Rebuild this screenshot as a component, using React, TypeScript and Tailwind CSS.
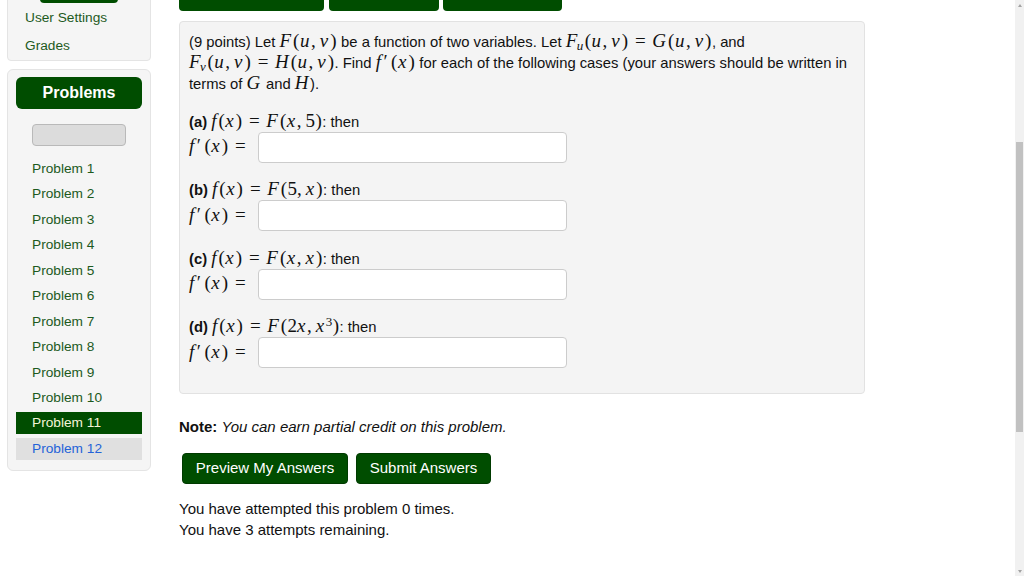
import React from "react";

const serif = { fontFamily: '"Liberation Serif", "Times New Roman", serif' };

function I({ children }: { children: React.ReactNode }) {
  return <span className="italic pr-[1.5px]">{children}</span>;
}
function M({ children }: { children: React.ReactNode }) {
  return (
    <span className="text-[19px] leading-[1] whitespace-nowrap" style={serif}>
      {children}
    </span>
  );
}
function Eq() {
  return <span className="mx-[6.5px]">=</span>;
}
function C() {
  return <span className="mr-[4px]">,</span>;
}
function P({ children }: { children: React.ReactNode }) {
  return <span className="px-[0.5px]">{children}</span>;
}

function Part({ label, rhs }: { label: string; rhs: React.ReactNode }) {
  return (
    <div className="mt-[16.5px]">
      <div className="h-[21px] leading-[18px] whitespace-nowrap">
        <span className="font-bold">({label})</span>{" "}
        <M>
          <I>f</I>
          <P>(</P>
          <I>x</I>
          <P>)</P>
          <Eq />
          {rhs}
        </M>
        : then
      </div>
      <div className="flex items-center h-[31px]">
        <div className="w-[69px] shrink-0 leading-[21px]">
          <M>
            <I>f</I>
            <span className="ml-[1px] mr-[3px]">′</span>
            <P>(</P>
            <I>x</I>
            <P>)</P>
            <Eq />
          </M>
        </div>
        <div className="w-[309px] h-[31px] bg-white border border-[#cccccc] rounded-[4px]" />
      </div>
    </div>
  );
}

export default function App() {
  const problems = Array.from({ length: 12 }, (_, i) => i + 1);
  return (
    <div
      className="flex w-[1024px] h-[576px] overflow-hidden bg-white text-[#111]"
      style={{ fontFamily: '"Liberation Sans", Arial, sans-serif' }}
    >
      <div className="flex-1 h-[576px] overflow-hidden">
        <div className="flex -mt-[30px]">
          {/* Sidebar */}
          <div className="ml-[7px] w-[144px] shrink-0">
            <div className="border border-[#e4e4e4] rounded-[4px] bg-[#f5f5f5] pt-[1px]">
              <div className="ml-[32px] w-[78px] h-[31px] bg-[#004d00] rounded-[4px] mb-[1px]" />
              <div className="h-[28px] leading-[28px] pl-[17px] text-[13.7px] text-[#1d5a1d]">User Settings</div>
              <div className="h-[28px] leading-[28px] pl-[17px] text-[13.7px] text-[#1d5a1d]">Grades</div>
            </div>
            <div className="mt-[8px] border border-[#e4e4e4] rounded-[6px] bg-[#f5f5f5] px-[8px] pt-[7px] pb-[10px]">
              <div className="h-[32px] rounded-[6px] bg-[#004d00] text-white font-bold text-[16px] flex items-center justify-center">
                Problems
              </div>
              <div className="mt-[15px] ml-[16px] w-[94px] h-[22px] rounded-[4px] bg-[#dcdcdc] border border-[#b9b9b9]" />
              <div className="mt-[12px] flex flex-col gap-[3.45px]">
                {problems.map((n) => (
                  <div
                    key={n}
                    className={
                      "h-[22px] leading-[22px] pl-[16px] text-[13.7px] " +
                      (n === 11
                        ? "bg-[#004d00] text-[#f4f4d8]"
                        : n === 12
                        ? "bg-[#e0e0e0] text-[#2463d8]"
                        : "text-[#1d5a1d]")
                    }
                  >
                    Problem {n}
                  </div>
                ))}
              </div>
            </div>
          </div>

          {/* Main */}
          <div className="ml-[28px] w-[686px] pt-[10px]">
            <div className="flex gap-[4.5px] text-white text-[15px]">
              <div className="w-[145px] h-[31px] bg-[#004d00] rounded-[4px] flex items-center justify-center">Previous Problem</div>
              <div className="w-[110px] h-[31px] bg-[#004d00] rounded-[4px] flex items-center justify-center">Problem List</div>
              <div className="w-[119px] h-[31px] bg-[#004d00] rounded-[4px] flex items-center justify-center">Next Problem</div>
            </div>

            <div className="mt-[10px] border border-[#e2e2e2] rounded-[4px] bg-[#f4f4f4] pt-[9px] px-[9px] pb-[25px] text-[14.8px]">
              <div className="h-[21px] leading-[19px] whitespace-nowrap">
                (9 points) Let{" "}
                <M>
                  <I>F</I>
                  <P>(</P>
                  <I>u</I>
                  <C />
                  <I>v</I>
                  <P>)</P>
                </M>{" "}
                be a function of two variables. Let{" "}
                <M>
                  <I>F</I>
                  <sub className="text-[13px] italic -ml-[2px] mr-[1px]">u</sub>
                  <P>(</P>
                  <I>u</I>
                  <C />
                  <I>v</I>
                  <P>)</P>
                  <Eq />
                  <I>G</I>
                  <P>(</P>
                  <I>u</I>
                  <C />
                  <I>v</I>
                  <P>)</P>
                </M>
                , and
              </div>
              <div className="h-[21px] leading-[19px] whitespace-nowrap">
                <M>
                  <I>F</I>
                  <sub className="text-[13px] italic -ml-[2px] mr-[1px]">v</sub>
                  <P>(</P>
                  <I>u</I>
                  <C />
                  <I>v</I>
                  <P>)</P>
                  <Eq />
                  <I>H</I>
                  <P>(</P>
                  <I>u</I>
                  <C />
                  <I>v</I>
                  <P>)</P>
                </M>
                . Find{" "}
                <M>
                  <I>f</I>
                  <span className="ml-[1px] mr-[3px]">′</span>
                  <P>(</P>
                  <I>x</I>
                  <P>)</P>
                </M>{" "}
                for each of the following cases (your answers should be written in
              </div>
              <div className="h-[21px] leading-[19px] whitespace-nowrap">
                terms of{" "}
                <M>
                  <I>G</I>
                </M>{" "}
                and{" "}
                <M>
                  <I>H</I>
                </M>
                ).
              </div>

              <Part
                label="a"
                rhs={
                  <>
                    <I>F</I>
                    <P>(</P>
                    <I>x</I>
                    <C />
                    5<P>)</P>
                  </>
                }
              />
              <Part
                label="b"
                rhs={
                  <>
                    <I>F</I>
                    <P>(</P>5
                    <C />
                    <I>x</I>
                    <P>)</P>
                  </>
                }
              />
              <Part
                label="c"
                rhs={
                  <>
                    <I>F</I>
                    <P>(</P>
                    <I>x</I>
                    <C />
                    <I>x</I>
                    <P>)</P>
                  </>
                }
              />
              <Part
                label="d"
                rhs={
                  <>
                    <I>F</I>
                    <P>(</P>2<I>x</I>
                    <C />
                    <I>x</I>
                    <sup className="text-[13px]">3</sup>
                    <P>)</P>
                  </>
                }
              />
            </div>

            <div className="mt-[22px] h-[21px] leading-[21px] text-[15px] whitespace-nowrap">
              <span className="font-bold">Note:</span> <span className="italic">You can earn partial credit on this problem.</span>
            </div>

            <div className="mt-[16px] ml-[3px] flex gap-[8px] text-white text-[15px]">
              <div className="w-[166px] h-[31px] bg-[#004d00] border border-[#003a00] rounded-[4px] flex items-center justify-center">
                Preview My Answers
              </div>
              <div className="w-[135px] h-[31px] bg-[#004d00] border border-[#003a00] rounded-[4px] flex items-center justify-center">
                Submit Answers
              </div>
            </div>

            <div className="mt-[14px] text-[15px] leading-[21px]">
              <div>You have attempted this problem 0 times.</div>
              <div>You have 3 attempts remaining.</div>
            </div>
          </div>
        </div>
      </div>

      {/* Scrollbar */}
      <div className="w-[9px] h-[576px] bg-[#f1f1f1] flex flex-col items-center shrink-0">
        <div className="h-[10px] flex items-center justify-center">
          <div className="w-0 h-0 border-l-[2.5px] border-r-[2.5px] border-b-[3px] border-l-transparent border-r-transparent border-b-[#a3a3a3]" />
        </div>
        <div className="mt-[132px] w-[7px] h-[290px] bg-[#c1c1c1]" />
        <div className="flex-1" />
        <div className="h-[10px] flex items-center justify-center">
          <div className="w-0 h-0 border-l-[2.5px] border-r-[2.5px] border-t-[3px] border-l-transparent border-r-transparent border-t-[#a3a3a3]" />
        </div>
      </div>
    </div>
  );
}
